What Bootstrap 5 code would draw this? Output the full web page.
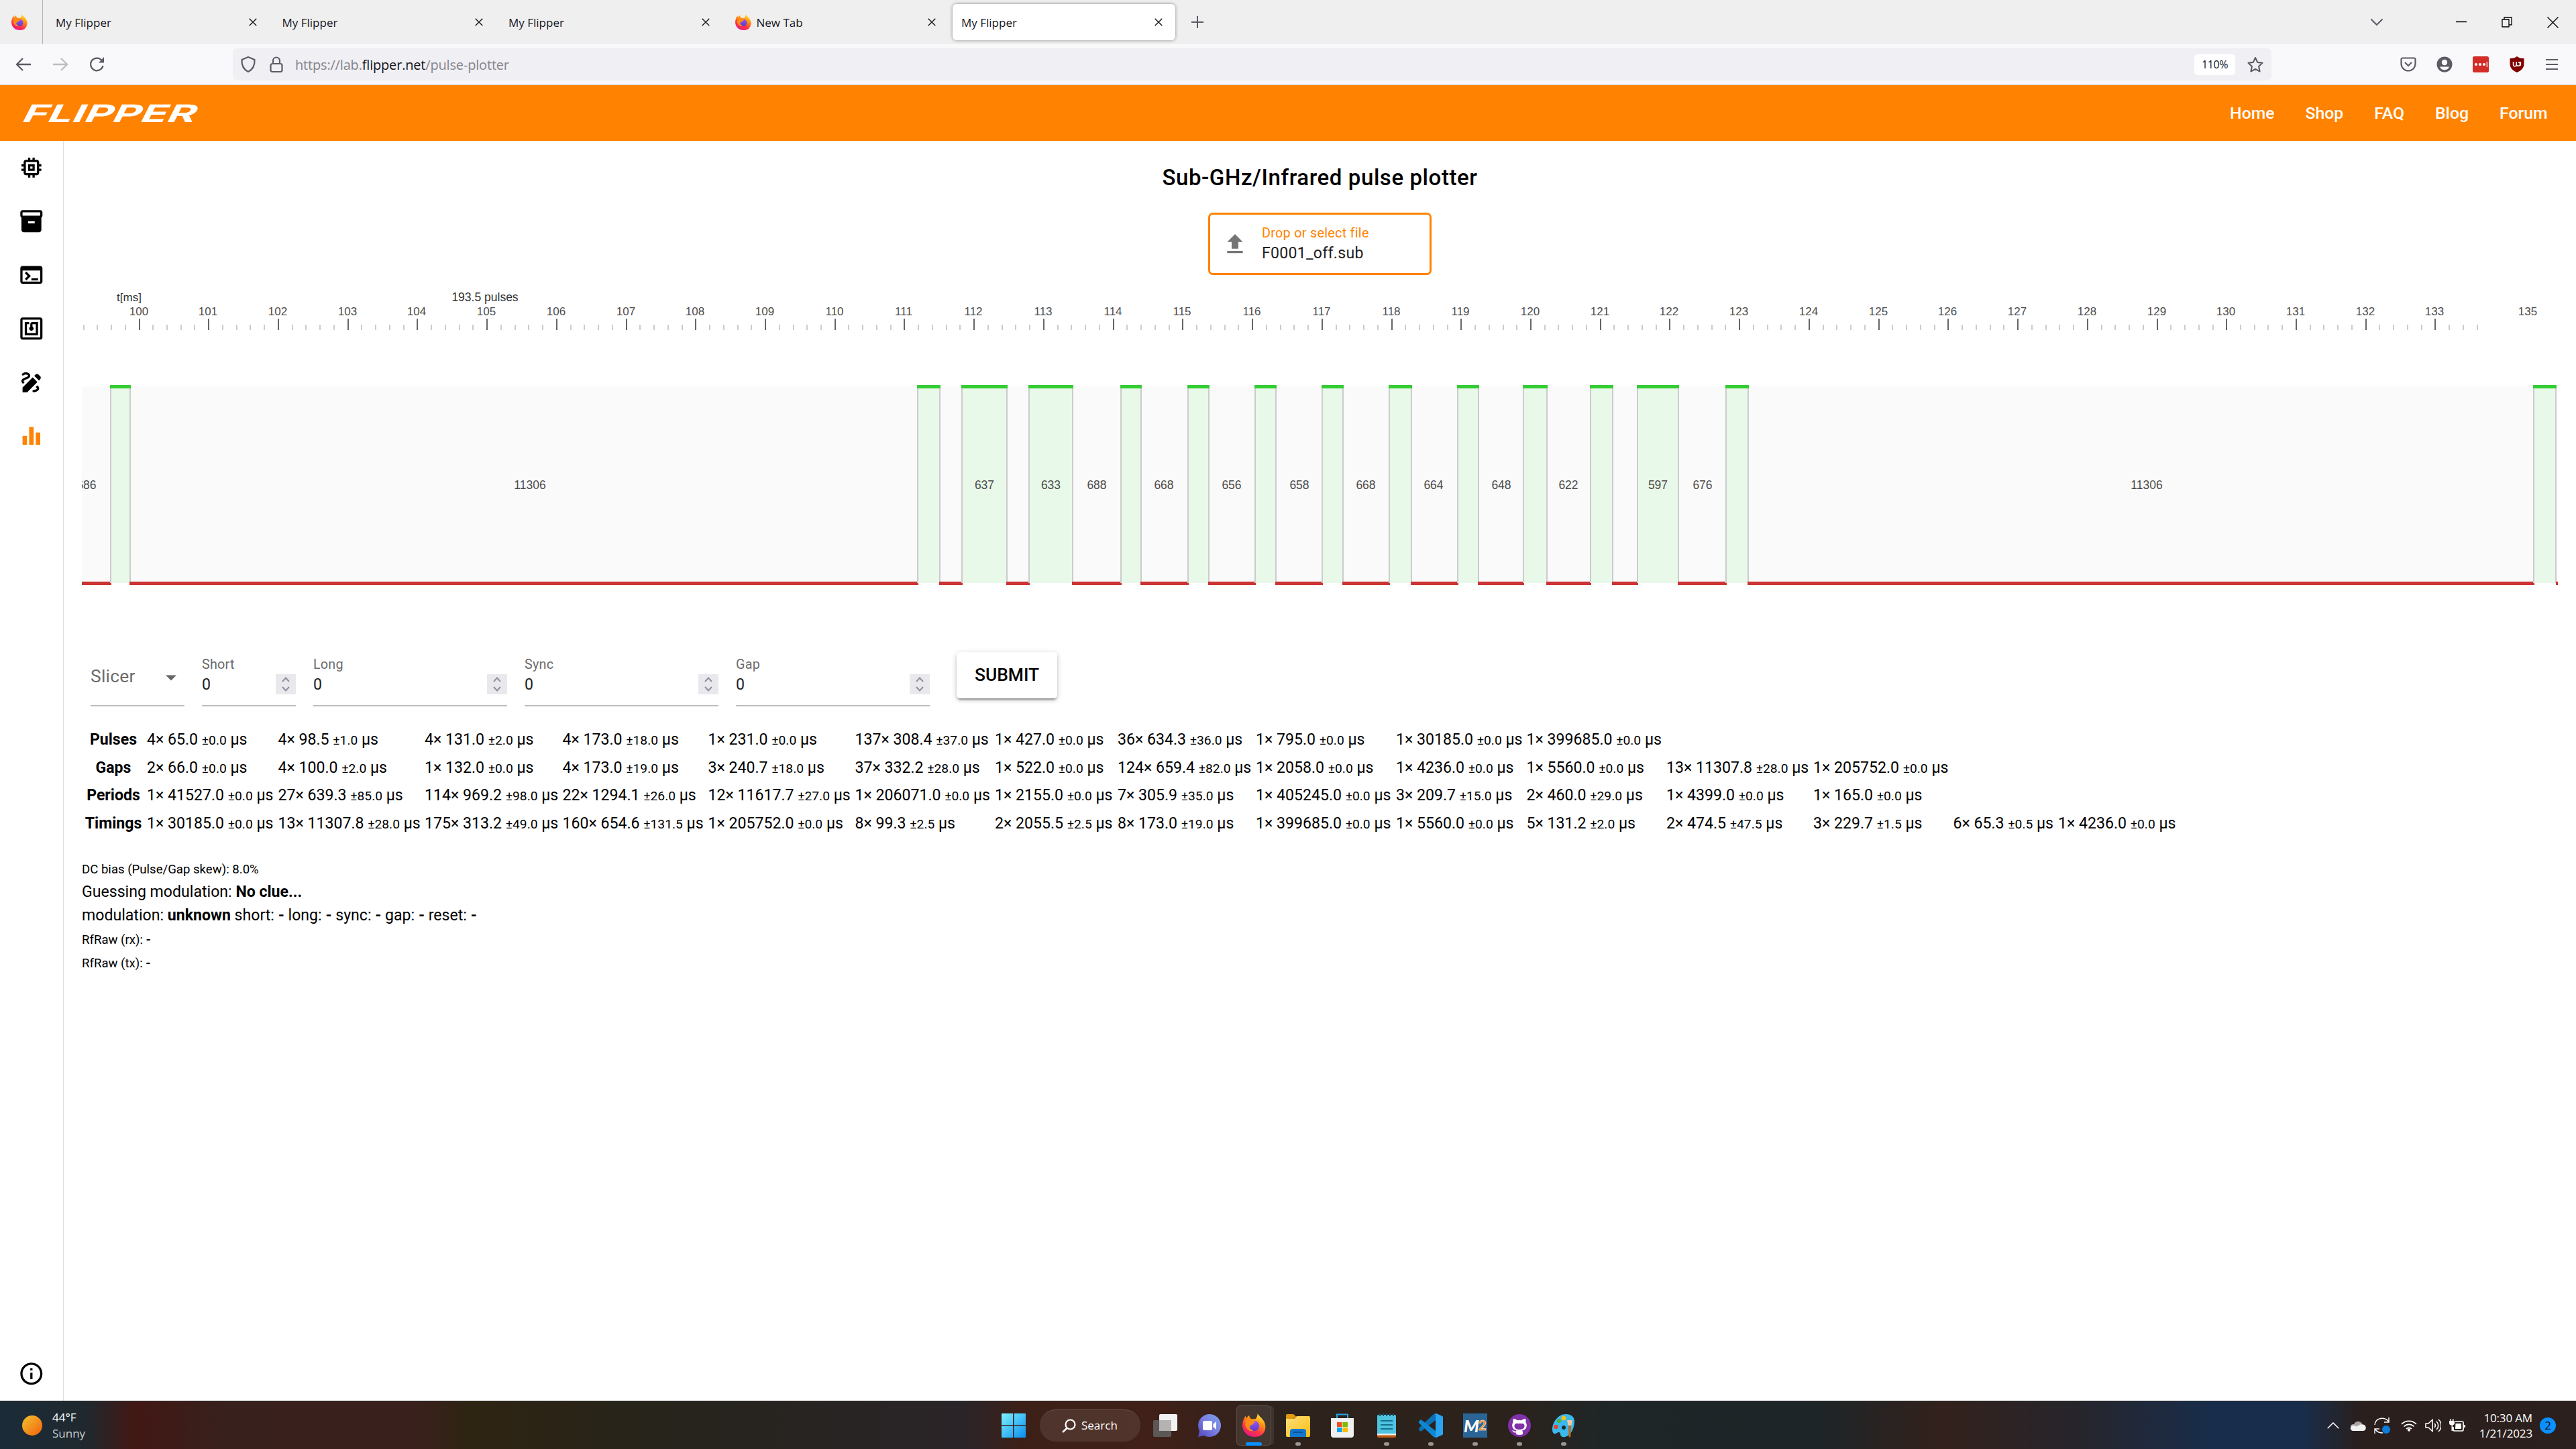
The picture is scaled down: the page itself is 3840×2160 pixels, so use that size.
<!DOCTYPE html>
<html lang="en">
<head>
<meta charset="utf-8">
<title>My Flipper</title>
<link href="https://cdn.jsdelivr.net/npm/bootstrap@5.3.0/dist/css/bootstrap.min.css" rel="stylesheet">
<script src="https://cdn.jsdelivr.net/npm/bootstrap@5.3.0/dist/js/bootstrap.bundle.min.js"></script>
<style>
  :root { --ui: "Open Sans", "Noto Sans", sans-serif; --orange: #ff8200; }
  html, body { height: 2160px; overflow: hidden; }
  body { width: 3840px; font-family: Roboto, sans-serif; color: #000; font-size: 23.1px; background: #fff; }
  svg { display: block; flex: none; }
  .shared-defs { width: 0; height: 0; }
  .chrome-ui { font-family: var(--ui); color: #15141a; }
  .tabstrip { height: 66px; background: #efefef; font-size: 17px; }
  .tabstrip span { padding-top: 1px; }
  .pinned { width: 64px; border-right: 1px solid #b4b4b4; padding-right: 5px; }
  .tab-item { width: 337.5px; padding: 0 19px; }
  .tab-item.is-active { width: 332px; height: 54px; margin-left: 6px; background: #fff; border-radius: 6px; box-shadow: 0 0 5px rgba(0,0,0,.42); padding: 0 19px 0 13px; }
  .win-keys { gap: 52px; padding-right: 26px; }
  .urlrow { height: 61px; background: #f9f9fb; border-bottom: 1px solid #ccc; }
  .nav-keys { width: 347px; padding-left: 23px; gap: 31px; }
  .urlbox { width: 3039px; height: 48px; background: #f0eff4; border-radius: 7px; font-size: 20px; padding: 0 11px; }
  .zoombox { width: 61px; height: 31px; border-radius: 5px; background: #fff; font-size: 16px; letter-spacing: -.4px; margin-right: 17px; }
  .urltxt { color: #85858c; margin-left: 18px; padding-top: 2px; letter-spacing: -.18px; }
  .urltxt b { font-weight: 400; color: #15141a; }
  .ext-keys { gap: 30px; padding-right: 26px; }
  .site-head { height: 83px; background: var(--orange); padding: 0 42.500px 0 28px; }
  .site-head .nav { gap: 46px; }
  .site-head a { color: #fff; font-weight: 500; font-size: 24.75px; text-decoration: none; padding-top: 1px; }
  .page-body { height: 1878px; }
  .side { width: 95px; border-right: 1px solid #ddd; padding: 20px 0; gap: 40.4px; }
  .side svg { width: 39.6px; height: 39.6px; fill: #000; }
  .content { padding: 35px 27px 0; }
  .page-title { font-size: 33px; font-weight: 500; line-height: 40px; margin: 0 0 32px; letter-spacing: .58px; }
  .dropfile { width: 333px; height: 93px; border: 3px solid var(--orange); border-radius: 7px; padding-left: 17px; gap: 16px; letter-spacing: .28px; }
  .dropfile .cap { font-size: 19.8px; line-height: 24px; color: var(--orange); }
  .dropfile .val { line-height: 28px; color: #212121; padding-top: 4px; }
  .plot { margin-top: 10px; }
  .plot text { font-family: "Liberation Sans", sans-serif; font-size: 17px; fill: #4d4d4d; text-anchor: middle; }
  .slicer-form { margin: 92px 0 0 13px; height: 81px; gap: 26px; }
  .fld { height: 81px; border-bottom: 2px solid #bdbdbd; padding-top: 6px; color: #212121; }
  .fld .cap { font-size: 19.8px; line-height: 26px; height: 24px; color: #6b6b6b; letter-spacing: .2px; }
  .fld .num { height: 30px; margin-top: 3px; line-height: 31px; }
  .w-s { width: 140px; } .w-l { width: 289px; }
  .spin { width: 30px; height: 30px; background: #e9e9ed; }
  .slc { font-size: 26.4px; color: #6b6b6b; padding: 0 4px 5px 0; letter-spacing: .25px; }
  .submit-btn { width: 150px; height: 69px; margin-left: 14px; border-radius: 5px; background: #fff; color: #000; font-size: 26.4px; font-weight: 500; padding: 0; border: 0; box-shadow: 0 2px 8px rgba(0,0,0,.2), 0 3px 3px rgba(0,0,0,.14), 0 5px 2px -3px rgba(0,0,0,.22); }
  .stats { margin: 29px 0 0; table-layout: fixed; width: 3140px; line-height: 30px; white-space: nowrap; }
  .stats tr { height: 41.75px; }
  .stats td, .stats th { padding: 0; vertical-align: middle; }
  .stats th { text-align: center; padding-right: 3px; font-weight: 700; }
  small { font-size: .8333em; line-height: 1; }
  .notes { margin-top: 28px; line-height: 35px; }
  .notes div { height: 35px; }
  .notes small { font-size: 18.6px; }
  .taskbar { height: 72px; font-family: var(--ui); color: #fff; border-top: 1px solid #2a2a2a;
    background: linear-gradient(90deg, #1a2c38 0, #20282e 130px, #421814 200px, #38201c 330px, #3a201c 620px, #2e2412 700px, #26241c 1000px, #2a2428 1440px, #3c2018 1520px, #402018 1720px, #2e231c 1900px, #2b221b 2250px, #1e2628 2400px, #1d2528 2700px, #33211c 2900px, #26252c 3100px, #182d4b 3300px, #182d4b 3430px, #2a1f1c 3520px, #2b201d 3840px); }
  .weather { width: 1478px; padding-left: 33px; gap: 15px; font-size: 17px; line-height: 24px; }
  .tile { width: 66px; height: 71px; }
  .tile > .dot { bottom: 5px; left: 29px; width: 8px; height: 5px; border-radius: 3px; background: #9b9796; }
  .tile > .hot { bottom: 5px; left: 21px; width: 24px; height: 5px; border-radius: 3px; background: #0a91ff; }
  .tile-open { width: 52px; height: 60px; border-radius: 6px; background: rgba(255,255,255,.09); border: 1px solid rgba(255,255,255,.12); box-shadow: 5px 0 0 -1px rgba(255,255,255,.08); }
  .searchpill { width: 150px; height: 48px; border-radius: 24px; margin: 0 4px 0 6px; background: rgba(255,255,255,.09); border-top: 1px solid rgba(255,255,255,.14); font-size: 17px; padding-left: 33px; gap: 8px; }
  .tray { padding-right: 30px; gap: 12px; }
  .clock { width: 88px; font-size: 17px; line-height: 23px; text-align: right; letter-spacing: -.15px; }
  .notif { width: 24px; height: 24px; border-radius: 50%; background: #0a91ff; color: #111; font-size: 17px; line-height: 23px; margin-left: -1px; }
</style>
</head>
<body class="d-flex flex-column">

<svg class="shared-defs position-absolute">
  <defs>
    <linearGradient id="ffBody" x1=".8" y1="0" x2=".3" y2="1"><stop offset="0" stop-color="#fff44f"/><stop offset=".35" stop-color="#ff980e"/><stop offset=".7" stop-color="#ff3647"/><stop offset="1" stop-color="#e31587"/></linearGradient>
    <linearGradient id="ffGlobe" x1="0" y1="0" x2="0" y2="1"><stop offset="0" stop-color="#9059ff"/><stop offset="1" stop-color="#5b3bc4"/></linearGradient>
    <linearGradient id="winG" x1="0" y1="0" x2="1" y2="1"><stop offset="0" stop-color="#7df3ff"/><stop offset="1" stop-color="#0a8cf0"/></linearGradient>
    <linearGradient id="sunG" x1="0" y1="0" x2="1" y2="1"><stop offset="0" stop-color="#f2c431"/><stop offset="1" stop-color="#f2610c"/></linearGradient>
    <linearGradient id="chatG" x1="1" y1="0" x2="0" y2="1"><stop offset="0" stop-color="#7aa4ec"/><stop offset=".5" stop-color="#7b7ee0"/><stop offset="1" stop-color="#5048c0"/></linearGradient>
    <linearGradient id="foldG" x1="0" y1="0" x2="1" y2="1"><stop offset="0" stop-color="#ffe07a"/><stop offset="1" stop-color="#fbbc14"/></linearGradient>
    <symbol id="ff" viewBox="0 0 34 34">
      <path d="M22 0c1 3 6 6 9 11 4 7 3 15-3 20-6 4-16 4-22-1C0 25-1 17 1 11c1-3 2-5 4-8 0 2 0 3 1 4 1-2 2-3 4-4 0 2 1 4 3 5h6c2-2 3-5 3-8z" fill="url(#ffBody)"/>
      <circle cx="17" cy="18" r="7.500" fill="url(#ffGlobe)"/>
      <path d="M5 9c3-2 7-1 9 2 2 0 4 0 5 1-1 2-3 2-4 3.500 0 1.500-3 1-4.500 3-.5 2.500 2 6 5.500 6-5 3-11-2-12-8z" fill="#ff8a16"/>
    </symbol>
    <symbol id="xx" viewBox="0 0 12 12"><path d="M.7.7l10.600 10.600M11.300.7L.7 11.300" stroke="#15141a" stroke-width="1.400" fill="none"/></symbol>
  </defs>
</svg>

<div class="chrome-ui">
  <div class="tabstrip d-flex align-items-center">
    <div class="pinned h-100 d-flex align-items-center justify-content-center"><svg width="24" height="24"><use href="#ff"/></svg></div>
    <div class="tab-item d-flex align-items-center justify-content-between"><span>My Flipper</span><svg width="12" height="12"><use href="#xx"/></svg></div>
    <div class="tab-item d-flex align-items-center justify-content-between"><span>My Flipper</span><svg width="12" height="12"><use href="#xx"/></svg></div>
    <div class="tab-item d-flex align-items-center justify-content-between"><span>My Flipper</span><svg width="12" height="12"><use href="#xx"/></svg></div>
    <div class="tab-item d-flex align-items-center"><svg width="24" height="24"><use href="#ff"/></svg><span class="ms-2 me-auto">New Tab</span><svg width="12" height="12"><use href="#xx"/></svg></div>
    <div class="tab-item is-active d-flex align-items-center justify-content-between"><span>My Flipper</span><svg width="12" height="12"><use href="#xx"/></svg></div>
    <svg class="ms-4" width="18" height="18" viewBox="0 0 18 18"><path d="M9 0v18M0 9h18" stroke="#5b5b66" stroke-width="2"/></svg>
    <div class="win-keys ms-auto d-flex align-items-center">
      <svg class="me-5" width="20" height="12" viewBox="0 0 20 12"><path d="M1.500 1.500l8.500 8.500 8.500-8.500" stroke="#5b5b66" stroke-width="2" fill="none"/></svg>
      <svg class="ms-2" width="16" height="16" viewBox="0 0 16 16"><path d="M0 7.500h16" stroke="#000" stroke-width="1.500"/></svg>
      <svg width="16" height="16" viewBox="0 0 16 16"><path d="M1 4h10v11H1zM4 4V1h11v11h-4" stroke="#000" stroke-width="1.300" fill="none"/></svg>
      <svg width="17" height="17" viewBox="0 0 17 17"><path d="M.5.5l16 16M16.500.5l-16 16" stroke="#000" stroke-width="1.300"/></svg>
    </div>
  </div>
  <div class="urlrow d-flex align-items-center">
    <div class="nav-keys d-flex align-items-center">
      <svg width="24" height="22" viewBox="0 0 24 22"><path d="M23 11H2M11 2l-9 9 9 9" stroke="#5b5b66" stroke-width="2.300" fill="none"/></svg>
      <svg width="24" height="22" viewBox="0 0 24 22"><path d="M1 11h21M13 2l9 9-9 9" stroke="#bcbcc2" stroke-width="2.300" fill="none"/></svg>
      <svg width="24" height="24" viewBox="0 0 24 24"><path d="M19 6.500A9.300 9.300 0 1 0 20.500 14" stroke="#5b5b66" stroke-width="2.300" fill="none"/><path d="M22 1v8.500h-8z" fill="#5b5b66"/></svg>
    </div>
    <div class="urlbox d-flex align-items-center">
      <svg width="24" height="26" viewBox="0 0 24 26"><path d="M12 2l9.500 4C22 15 18 21 12 24 6 21 2 15 2.500 6z" stroke="#5b5b66" stroke-width="2.200" fill="none" stroke-linejoin="round"/></svg>
      <svg style="margin-left:20px" width="20" height="26" viewBox="0 0 20 26"><path d="M5 12V7.500a5 5 0 0 1 10 0V12M4 12h12a2.500 2.500 0 0 1 2.500 2.500v7A2.500 2.500 0 0 1 16 24H4a2.500 2.500 0 0 1-2.500-2.500v-7A2.500 2.500 0 0 1 4 12z" stroke="#5b5b66" stroke-width="2.200" fill="none"/></svg>
      <span class="urltxt me-auto">https://lab.<b>flipper.net</b>/pulse-plotter</span>
      <div class="zoombox d-flex align-items-center justify-content-center"><span>110%</span></div>
      <svg width="26" height="25" viewBox="0 0 26 25"><path d="M13 2l3.200 6.900 7.300.9-5.400 5.200 1.500 7.500L13 18.900 6.400 22.500l1.500-7.500L2.500 9.800l7.300-.9z" stroke="#5b5b66" stroke-width="2.100" fill="none" stroke-linejoin="round"/></svg>
    </div>
    <div class="ext-keys d-flex align-items-center ms-auto">
      <svg width="24" height="22" viewBox="0 0 24 22"><path d="M3.500 1.500h17a2 2 0 0 1 2 2V10a10.500 10.500 0 0 1-21 0V3.500a2 2 0 0 1 2-2zM7 8l5 5 5-5" stroke="#5b5b66" stroke-width="2.200" fill="none"/></svg>
      <svg width="24" height="24" viewBox="0 0 24 24"><circle cx="12" cy="12" r="11.500" fill="#5b5b66"/><circle cx="12" cy="9" r="4.200" fill="#f9f9fb"/><path d="M5 15.500h14a7.500 7.500 0 0 1-14 0z" fill="#f9f9fb"/></svg>
      <svg width="24" height="24" viewBox="0 0 24 24"><rect width="24" height="24" rx="2.500" fill="#d32d27"/><circle cx="5" cy="12" r="2.100" fill="#fff"/><circle cx="11" cy="12" r="2.100" fill="#fff"/><circle cx="17" cy="12" r="2.100" fill="#fff"/><path d="M21.300 8v8" stroke="#fff" stroke-width="1.200"/></svg>
      <svg width="24" height="24" viewBox="0 0 24 24"><path d="M12 0c4 3 7 3 10.500 3v8c0 7-5 10.500-10.500 13C6.500 21.500 1.500 18 1.500 11V3C5 3 8 3 12 0z" fill="#800000"/><path d="M6.500 8v4.500a2.300 2.300 0 0 0 4.600 0V8M11.100 11.500a2.800 2.800 0 1 0 2.800-2.800h3.500v5" stroke="#fff" stroke-width="1.500" fill="none"/></svg>
      <svg width="20" height="18" viewBox="0 0 20 18"><path d="M1 2h18M1 9h18M1 16h18" stroke="#5b5b66" stroke-width="2.200"/></svg>
    </div>
  </div>
</div>

<header class="site-head d-flex align-items-center justify-content-between">
  <svg width="280" height="44" viewBox="0 0 280 44"><text transform="translate(5,35) skewX(-12)" x="0" y="0" font-family="Inter, sans-serif" font-weight="700" font-style="italic" font-size="36" fill="#fff" textLength="258" lengthAdjust="spacingAndGlyphs">FLIPPER</text></svg>
  <nav class="nav"><a href="#">Home</a><a href="#">Shop</a><a href="#">FAQ</a><a href="#">Blog</a><a href="#">Forum</a></nav>
</header>

<div class="page-body d-flex">
  <aside class="side d-flex flex-column align-items-center">
    <svg viewBox="0 0 24 24"><path d="M15 9H9v6h6V9zm-2 4h-2v-2h2v2zm8-2V9h-2V7c0-1.100-.9-2-2-2h-2V3h-2v2h-2V3H9v2H7c-1.100 0-2 .9-2 2v2H3v2h2v2H3v2h2v2c0 1.100.9 2 2 2h2v2h2v-2h2v2h2v-2h2c1.100 0 2-.9 2-2v-2h2v-2h-2v-2h2zm-4 6H7V7h10v10z"/></svg>
    <svg viewBox="0 0 24 24"><path d="M20 2H4c-1 0-2 .9-2 2v3.010c0 .72.43 1.340 1 1.690V20c0 1.100 1.100 2 2 2h14c.9 0 2-.9 2-2V8.700c.57-.35 1-.97 1-1.690V4c0-1.100-1-2-2-2zm-5 12H9v-2h6v2zm5-7H4V4h16v3z"/></svg>
    <svg viewBox="0 0 24 24"><path d="M20 4H4c-1.110 0-2 .9-2 2v12c0 1.100.89 2 2 2h16c1.100 0 2-.9 2-2V6c0-1.100-.89-2-2-2zm0 14H4V8h16v10zm-2-1h-6v-2h6v2zM7.500 17l-1.410-1.410L8.670 13l-2.590-2.590L7.500 9l4 4-4 4z"/></svg>
    <svg viewBox="0 0 24 24"><path d="M20 2H4c-1.100 0-2 .9-2 2v16c0 1.100.9 2 2 2h16c1.100 0 2-.9 2-2V4c0-1.100-.9-2-2-2zm0 18H4V4h16v16zM18 6h-5c-1.100 0-2 .9-2 2v2.280c-.6.350-1 .98-1 1.720 0 1.100.9 2 2 2s2-.9 2-2c0-.74-.4-1.380-1-1.720V8h3v8H8V8h2V6H6v12h12V6z"/></svg>
    <svg viewBox="0 0 24 24"><path d="M18.850 10.390l1.060-1.060c.78-.78.78-2.050 0-2.830L18.500 5.090c-.78-.78-2.050-.78-2.830 0l-1.060 1.060 4.240 4.240zm-5.660-2.830L4 16.760V21h4.240l9.190-9.190-4.240-4.250zM19 17.500c0 2.190-2.540 3.500-5 3.500-.55 0-1-.45-1-1s.45-1 1-1c1.540 0 3-.73 3-1.500 0-.47-.48-.87-1.230-1.200l1.480-1.480c1.070.63 1.750 1.470 1.750 2.680zM4.580 13.350C3.610 12.790 3 12.060 3 11c0-1.800 1.890-2.630 3.560-3.360C7.590 7.180 9 6.560 9 6c0-.41-.78-1-2-1-1.260 0-1.800.61-1.830.64-.35.41-.98.46-1.400.12-.41-.34-.49-.95-.15-1.380C3.730 4.240 4.760 3 7 3s4 1.320 4 3c0 1.870-1.930 2.720-3.640 3.470C6.420 9.880 5 10.500 5 11c0 .31.43.6 1.070.86l-1.490 1.490z"/></svg>
    <svg viewBox="0 0 24 24"><path style="fill:var(--orange)" d="M10 20h4V4h-4v16zm-6 0h4v-8H4v8zM16 9v11h4V9h-4z"/></svg>
    <svg class="mt-auto" viewBox="0 0 24 24"><path d="M11 7h2v2h-2zm0 4h2v6h-2zm1-9C6.480 2 2 6.480 2 12s4.480 10 10 10 10-4.480 10-10S17.520 2 12 2zm0 18c-4.410 0-8-3.590-8-8s3.590-8 8-8 8 3.590 8 8-3.590 8-8 8z"/></svg>
  </aside>

  <main class="content flex-grow-1 d-flex flex-column">
    <h1 class="page-title text-center">Sub-GHz/Infrared pulse plotter</h1>
    <div class="dropfile d-flex align-items-center align-self-center">
      <svg width="40" height="40" viewBox="0 0 24 24" fill="#757575"><path d="M9 16h6v-6h4l-7-7-7 7h4zm-4 2h14v2H5z"/></svg>
      <div class="ps-1"><div class="cap">Drop or select file</div><div class="val">F0001_off.sub</div></div>
    </div>

    <svg class="plot" id="plot" width="3691" height="460" viewBox="122 420 3691 460"></svg>

    <form class="slicer-form d-flex">
      <div class="fld w-s slc d-flex align-items-center justify-content-between"><span>Slicer</span><svg width="32" height="40" viewBox="0 0 20 24" fill="#666"><path d="M5 10.500l5 5 5-5z"/></svg></div>
      <div class="fld w-s"><div class="cap">Short</div><div class="num d-flex justify-content-between"><span>0</span><div class="spin"></div></div></div>
      <div class="fld w-l"><div class="cap">Long</div><div class="num d-flex justify-content-between"><span>0</span><div class="spin"></div></div></div>
      <div class="fld w-l"><div class="cap">Sync</div><div class="num d-flex justify-content-between"><span>0</span><div class="spin"></div></div></div>
      <div class="fld w-l"><div class="cap">Gap</div><div class="num d-flex justify-content-between"><span>0</span><div class="spin"></div></div></div>
      <button type="button" class="btn submit-btn">SUBMIT</button>
    </form>

    <table class="stats"><colgroup id="cols"></colgroup><tbody id="rows"></tbody></table>

    <div class="notes">
      <div><small>DC bias (Pulse/Gap skew): 8.0%</small></div>
      <div>Guessing modulation: <b>No clue...</b></div>
      <div>modulation: <b>unknown</b> short: <b>-</b> long: <b>-</b> sync: <b>-</b> gap: <b>-</b> reset: <b>-</b></div>
      <div><small>RfRaw (rx): <b>-</b></small></div>
      <div><small>RfRaw (tx): <b>-</b></small></div>
    </div>
  </main>
</div>

<footer class="taskbar d-flex align-items-center">
  <div class="weather d-flex align-items-center">
    <svg width="30" height="30" viewBox="0 0 30 30"><circle cx="15" cy="15" r="15" fill="url(#sunG)"/></svg>
    <div><div>44°F</div><div class="opacity-75">Sunny</div></div>
  </div>
  <div class="tile d-flex align-items-center justify-content-center"><svg width="36" height="36" viewBox="0 0 36 36"><path d="M1 0h16v17.500H0V1a1 1 0 0 1 1-1zM18.500 0H35a1 1 0 0 1 1 1v16.500H18.500zM0 19h17v17H1a1 1 0 0 1-1-1zM18.500 19H36v16a1 1 0 0 1-1 1H18.500z" fill="url(#winG)"/></svg></div>
  <div class="searchpill d-flex align-items-center"><svg width="21" height="21" viewBox="0 0 21 21"><circle cx="12.500" cy="8.500" r="7" stroke="#fff" stroke-width="2.200" fill="none"/><path d="M8 13.500l-7 6.500" stroke="#fff" stroke-width="2.400"/></svg><span>Search</span></div>
  <div class="tile d-flex align-items-center justify-content-center"><svg width="36" height="34" viewBox="0 0 36 34"><rect x="0" y="9" width="27" height="25" rx="2" fill="#5b5856"/><rect x="9" y="0" width="27" height="25" rx="2" fill="#f2f2f2"/><path d="M9 9h18v16H9z" fill="#b5b3b2"/></svg></div>
  <div class="tile d-flex align-items-center justify-content-center"><svg width="36" height="36" viewBox="0 0 36 36"><path d="M18 1a17 17 0 1 1-8 32l-9 2 2-9A17 17 0 0 1 18 1z" fill="url(#chatG)"/><rect x="8" y="11" width="14" height="14" rx="2.500" fill="#fff"/><path d="M23.500 16l4.500-4v12l-4.500-4z" fill="#fff"/></svg></div>
  <div class="tile position-relative d-flex align-items-center justify-content-center"><div class="tile-open d-flex align-items-center justify-content-center"><svg width="35" height="35"><use href="#ff"/></svg></div><span class="hot position-absolute"></span></div>
  <div class="tile position-relative d-flex align-items-center justify-content-center"><svg width="36" height="34" viewBox="0 0 36 34"><path d="M0 2a2 2 0 0 1 2-2h9l4 3.500-4 4H0z" fill="#e09a10"/><path d="M0 7h12l4-4h18a2 2 0 0 1 2 2v27a2 2 0 0 1-2 2H2a2 2 0 0 1-2-2z" fill="url(#foldG)"/><path d="M6 34V26a4 4 0 0 1 4-4h16a4 4 0 0 1 4 4v8z" fill="#1177cf"/><path d="M11 27h14" stroke="#0b4f94" stroke-width="2"/></svg><span class="dot position-absolute"></span></div>
  <div class="tile d-flex align-items-center justify-content-center"><svg width="36" height="36" viewBox="0 0 36 36"><path d="M10 8V1.500h16V8" stroke="#25a7ea" stroke-width="2" fill="none"/><path d="M1 7h34v25a4 4 0 0 1-4 4H5a4 4 0 0 1-4-4z" fill="#f0f0f0"/><path d="M10 13h7.500v7H10z" fill="#f25022"/><path d="M18.500 13H26v7h-7.500z" fill="#7fba00"/><path d="M10 21h7.500v7H10z" fill="#00a4ef"/><path d="M18.500 21H26v7h-7.500z" fill="#ffb900"/></svg></div>
  <div class="tile position-relative d-flex align-items-center justify-content-center"><svg width="28" height="36" viewBox="0 0 28 36"><path d="M0 31h28v3a2 2 0 0 1-2 2H2a2 2 0 0 1-2-2z" fill="#c05a10"/><path d="M0 4a2 2 0 0 1 2-2h24a2 2 0 0 1 2 2v27H0z" fill="#4ec3df"/><path d="M0 30h28v2.500H0z" fill="#eee"/><path d="M5 11h18M5 17h18M5 23h18" stroke="#14708c" stroke-width="2"/><path d="M4 0v4M9 0v4M14 0v4M19 0v4M24 0v4" stroke="#14536b" stroke-width="2"/></svg><span class="dot position-absolute"></span></div>
  <div class="tile position-relative d-flex align-items-center justify-content-center"><svg width="36" height="36" viewBox="0 0 36 36"><path d="M25 10L3 27l-3-3v-2L22 1l4-1z" fill="#0a70b8"/><path d="M25 26L3 9l-3 3v2l22 21 4 1z" fill="#0f87d2"/><path d="M26 0l9 4a2 2 0 0 1 1 2v24a2 2 0 0 1-1 2l-9 4-2-1 1-1V2l-1-1z" fill="#2aa5f2"/></svg><span class="dot position-absolute"></span></div>
  <div class="tile position-relative d-flex align-items-center justify-content-center"><svg width="36" height="36" viewBox="0 0 36 36"><path d="M0 0h36v36H0z" fill="#2b6596"/><text x="1" y="28" font-family="Lato, sans-serif" font-style="italic" font-weight="900" font-size="25" fill="#fff" textLength="23" lengthAdjust="spacingAndGlyphs">M</text><text x="23" y="25" font-family="Lato, sans-serif" font-weight="900" font-size="20" fill="#f58220" stroke="#fff" stroke-width=".5">2</text></svg><span class="dot position-absolute"></span></div>
  <div class="tile position-relative d-flex align-items-center justify-content-center"><svg width="34" height="34" viewBox="0 0 34 34"><circle cx="17" cy="17" r="17" fill="#8031a7"/><path d="M8 7c3 0 4.500 1.500 6 2.300a16 16 0 0 1 6 0C21.500 8.500 23 7 26 7c1 2 .6 4 .3 5 3 4 1.700 11.500-5.300 12.500 1 1 1 2.500 1 5.500-3 1.300-7 1.300-10 0v-2.500c-4 .8-4.500-2-6-3.200 2.500-.5 3 2 6 1.200.2-.6.400-.8.7-1.200C6 23 4.700 16 7.700 12 7.300 11 7 9 8 7z" fill="#fff"/><path d="M9.500 17c.5-4 4-3 7.500-3s7-1 7.500 3c.4 4-3 6-7.500 6s-8-2-7.500-6z" fill="#8031a7"/></svg><span class="dot position-absolute"></span></div>
  <div class="tile position-relative d-flex align-items-center justify-content-center"><svg width="34" height="36" viewBox="0 0 34 36"><path d="M20 1C8 1 0 14 0 24c0 6 4 8 7 5 3-2 5-1 5 2s3 5 7 4c9-2 14-14 14-23C33 5 28 1 20 1z" fill="#3cb9ec"/><circle cx="17" cy="7" r="3.300" fill="#f7c313"/><circle cx="10" cy="11" r="3" fill="#4fae35"/><circle cx="5.500" cy="20" r="3.200" fill="#e0452e"/><circle cx="17" cy="21" r="3" fill="#1d2a35"/><path d="M24 17h4l-.6 17a1.500 1.500 0 0 1-3 0z" fill="#b86a1e"/><path d="M22 10h8l-1.500 8h-5z" fill="#f0c9a0"/></svg><span class="dot position-absolute"></span></div>

  <div class="tray ms-auto d-flex align-items-center">
    <svg class="me-1" width="18" height="10" viewBox="0 0 18 10"><path d="M.7 9.300L9 1l8.300 8.300" stroke="#fff" stroke-width="1.500" fill="none"/></svg>
    <svg width="24" height="16" viewBox="0 0 24 16"><path d="M6 6a7 7 0 0 1 13 1l-8 6H5a5 5 0 0 1-4-5c1-1.500 3-2 5-2z" fill="#a8a5a4"/><path d="M4 16a4 4 0 0 1-1-7.500c3-1 5 0 7 1l5-3 4 0a4.900 4.900 0 0 1 1.500 9.500z" fill="#f1f1f1"/></svg>
    <svg class="me-1" width="24" height="24" viewBox="0 0 24 24"><path d="M1 11C2 0 16-2 22 6.500M22 0v7h-7M1 24v-7h7M2 18c2 3 6 5 11 5" stroke="#fff" stroke-width="1.400" fill="none"/><circle cx="18" cy="18" r="6" fill="#0b7ddb"/></svg>
    <svg width="24" height="18" viewBox="0 0 24 18"><path d="M1 7a15.500 15.500 0 0 1 22 0M4.500 10.500a10.600 10.600 0 0 1 15 0M8 14a5.700 5.700 0 0 1 8 0" stroke="#fff" stroke-width="1.700" fill="none"/><circle cx="12" cy="15.500" r="2.200" fill="#fff"/></svg>
    <svg width="24" height="20" viewBox="0 0 24 20"><path d="M1 7h4l6-5.500v17L5 13H1zM14 7a4 4 0 0 1 0 6M17 4a8 8 0 0 1 0 12M20 1a12 12 0 0 1 0 18" stroke="#fff" stroke-width="1.600" fill="none"/></svg>
    <svg width="24" height="20" viewBox="0 0 24 20"><path d="M9 4h10a2 2 0 0 1 2 2v10a2 2 0 0 1-2 2H8a2 2 0 0 1-2-2v-4" stroke="#fff" stroke-width="1.700" fill="none"/><path d="M9.500 7H18v8H9zM21.500 9H24v4h-2.500zM0 3h8v3a3.500 3.500 0 0 1-3 3.500V18H3.500V9.500A3.500 3.500 0 0 1 0 6zM1.500 0h1.500v3H1.500zM5 0h1.500v3H5z" fill="#fff"/></svg>
    <div class="clock"><div>10:30 AM</div><div>1/21/2023</div></div>
    <div class="notif text-center">2</div>
  </div>
</footer>

<script>
// Pulse plot: every entry is [left, right, label] of a high level, gaps lie between them.
const highs = [[164,195],[1367,1402],[1433,1502,637],[1533,1600,633],[1670,1702],[1770,1803],[1870,1903],[1970,2003],[2070,2105],[2172,2205],[2270,2307],[2370,2405],[2440,2503,597],[2572,2607],[3776,3811]];
const gapLabels = [[129,686],[790,11306],[1635,688],[1735,668],[1836,656],[1937,658],[2036,668],[2137,664],[2238,648],[2338,622],[2538,676],[3200,11306]];
let s = '<rect x="122" y="576" width="3690" height="293" fill="#fafafa"/>';
for (let i = -4; i <= 168; i++) {
  const x = Math.round(207.5 + i * 20.745);
  s += i % 5 === 0 ? `<path d="M${x} 475v17" stroke="#666" stroke-width="2"/>` : `<path d="M${x} 484v8" stroke="#ccc" stroke-width="2"/>`;
  if (i % 5 === 0) s += `<text x="${x - 1}" y="470">${100 + i / 5}</text>`;
}
s += '<text x="3768" y="470">135</text><text x="192.500" y="449" style="fill:#333">t[ms]</text><text x="723" y="449" style="fill:#333;font-size:17.500px">193.5 pulses</text>';
let prev = 122;
for (const [a, b, t] of highs) {
  s += `<path d="M${prev} 869.500H${a + 2}" stroke="#c33" stroke-width="5"/>`;
  s += `<rect x="${a}" y="576" width="${b - a}" height="293" fill="#e8f8e9"/><path d="M${a + 1} 576v293M${b - 1} 576v293" stroke="#ccc" stroke-width="2"/><path d="M${a} 576.500H${b}" stroke="#3c3" stroke-width="5"/>`;
  if (t) s += `<text x="${(a + b) / 2}" y="729" style="font-size:17.500px">${t}</text>`;
  prev = b - 2;
}
s += '<path d="M3810 869.500h3" stroke="#c33" stroke-width="5"/>';
for (const [x, t] of gapLabels) s += `<text x="${x}" y="729" style="font-size:17.500px">${t}</text>`;
document.getElementById('plot').innerHTML = s;

document.querySelectorAll('.spin').forEach(e => e.innerHTML = '<svg width="30" height="30" viewBox="0 0 30 30"><path d="M10 11l5-5.500 5 5.500M10 19l5 5.500 5-5.500" stroke="#8f8f9d" stroke-width="2" fill="none"/></svg>');

// Histogram table: "count value deviation" cells per row.
const edges = [122,219,414.5,633,838.5,1055.5,1274.5,1483,1666,1872,2081,2275.5,2484,2703,2911.5,3068,3262];
document.getElementById('cols').innerHTML = edges.slice(1).map((e, i) => `<col style="width:${e - edges[i]}px">`).join('');
const stats = {
  Pulses: '4 65.0 0.0|4 98.5 1.0|4 131.0 2.0|4 173.0 18.0|1 231.0 0.0|137 308.4 37.0|1 427.0 0.0|36 634.3 36.0|1 795.0 0.0|1 30185.0 0.0|1 399685.0 0.0',
  Gaps: '2 66.0 0.0|4 100.0 2.0|1 132.0 0.0|4 173.0 19.0|3 240.7 18.0|37 332.2 28.0|1 522.0 0.0|124 659.4 82.0|1 2058.0 0.0|1 4236.0 0.0|1 5560.0 0.0|13 11307.8 28.0|1 205752.0 0.0',
  Periods: '1 41527.0 0.0|27 639.3 85.0|114 969.2 98.0|22 1294.1 26.0|12 11617.7 27.0|1 206071.0 0.0|1 2155.0 0.0|7 305.9 35.0|1 405245.0 0.0|3 209.7 15.0|2 460.0 29.0|1 4399.0 0.0|1 165.0 0.0',
  Timings: '1 30185.0 0.0|13 11307.8 28.0|175 313.2 49.0|160 654.6 131.5|1 205752.0 0.0|8 99.3 2.5|2 2055.5 2.5|8 173.0 19.0|1 399685.0 0.0|1 5560.0 0.0|5 131.2 2.0|2 474.5 47.5|3 229.7 1.5|6 65.3 0.5|1 4236.0 0.0'
};
document.getElementById('rows').innerHTML = Object.entries(stats).map(([k, v]) =>
  `<tr><th>${k}</th>` + v.split('|').map(c => { const [n, t, d] = c.split(' '); return `<td>${n}× ${t} <small>±${d}</small> μs</td>`; }).join('') + '</tr>').join('');
</script>
</body>
</html>
